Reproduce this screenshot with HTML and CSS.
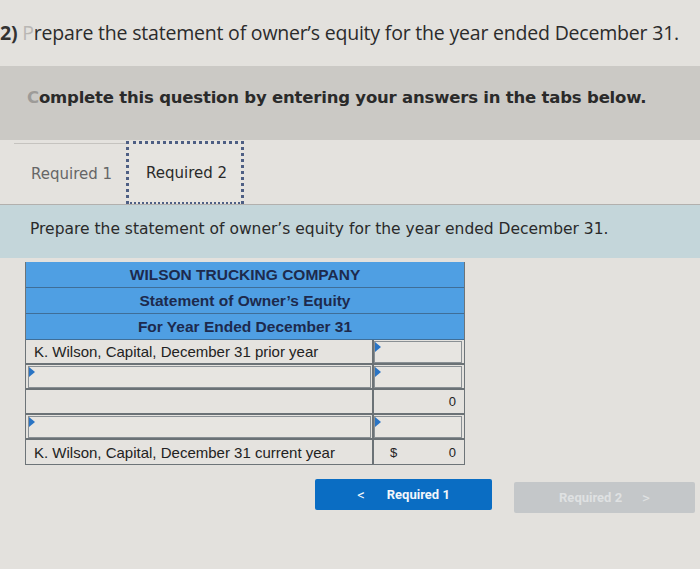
FILE: index.html
```html
<!DOCTYPE html>
<html>
<head>
<meta charset="utf-8">
<link rel="stylesheet" href="styles.css">
</head>
<body>
<h1 class="title"><span class="num">2)</span> <span class="p-faint">P</span>repare the statement of owner’s equity for the year ended December 31.</h1>

<div class="instructions"><span class="c-faint">C</span>omplete this question by entering your answers in the tabs below.</div>

<div class="tabs">
  <div class="tab">Required 1</div>
  <div class="tab tab-active">Required 2</div>
</div>

<div class="prompt">Prepare the statement of owner’s equity for the year ended December 31.</div>

<div class="sheet">
  <div class="hrow">WILSON TRUCKING COMPANY</div>
  <div class="hrow">Statement of Owner’s Equity</div>
  <div class="hrow">For Year Ended December 31</div>

  <div class="row">
    <div class="lbl">K. Wilson, Capital, December 31 prior year</div>
    <div class="val"><div class="inp"></div></div>
  </div>
  <div class="row">
    <div class="lbl"><div class="inp"></div></div>
    <div class="val"><div class="inp"></div></div>
  </div>
  <div class="row">
    <div class="lbl"></div>
    <div class="val num-right">0</div>
  </div>
  <div class="row">
    <div class="lbl"><div class="inp"></div></div>
    <div class="val"><div class="inp"></div></div>
  </div>
  <div class="row last">
    <div class="lbl">K. Wilson, Capital, December 31 current year</div>
    <div class="val total"><span class="dollar">$</span><span>0</span></div>
  </div>
</div>

<div class="nav">
  <div class="btn btn-prev"><span class="chev">&lt;</span>Required 1</div>
  <div class="btn btn-next">Required 2<span class="chev">&gt;</span></div>
</div>
</body>
</html>
```

FILE: styles.css
```css
html, body {
  margin: 0;
  padding: 0;
}
body {
  width: 700px;
  height: 569px;
  overflow: hidden;
  background: #e3e1dd;
  font-family: "Liberation Sans", Arial, sans-serif;
  color: #222;
}
.title {
  margin: 0;
  padding: 20px 0 0 0;
  height: 46px;
  box-sizing: border-box;
  font-family: "Open Sans", "Liberation Sans", sans-serif;
  font-weight: 400;
  font-size: 19.5px;
  line-height: 26px;
  color: #2b2b2b;
  white-space: nowrap;
  letter-spacing: -0.2px;
}
.title .num {
  font-weight: 700;
  color: #333;
}
.title .p-faint {
  color: #b9b7b4;
}
.instructions {
  margin-top: 20px;
  height: 74px;
  background: #cbc9c5;
  box-sizing: border-box;
  padding: 21px 0 0 27px;
  font-family: "DejaVu Sans", Verdana, sans-serif;
  font-weight: 700;
  font-size: 16.5px;
  line-height: 22px;
  color: #2a2a2a;
  letter-spacing: -0.2px;
}
.c-faint {
  color: #9d9b98;
}
.tabs {
  display: flex;
  align-items: stretch;
  height: 65px;
  box-sizing: border-box;
  padding-left: 14px;
  border-bottom: 1px solid #b2b0ad;
  background: #e4e2de;
}
.tab {
  display: flex;
  align-items: center;
  padding: 0 14px 0 17px;
  margin-top: 3px;
  border-top: 1px solid #c5c3bf;
  font-family: "DejaVu Sans", Verdana, sans-serif;
  font-size: 15px;
  color: #666;
}
.tab-active {
  color: #2a2a2a;
  border: 3px dotted #4e5f84;
  border-bottom-width: 2px;
  padding: 0 14px 0 17px;
  margin-top: 1px;
  background: #e6e4e0;
}
.prompt {
  height: 53px;
  box-sizing: border-box;
  background: #c4d6da;
  padding: 14px 0 0 30px;
  font-family: "DejaVu Sans", Verdana, sans-serif;
  font-size: 15.5px;
  line-height: 20px;
  color: #2a2a2a;
}
.sheet {
  margin: 4px 0 0 25px;
  width: 438px;
  border: 1px solid #6d7478;
  border-top: none;
}
.hrow {
  height: 25px;
  background: #4f9fe3;
  border-bottom: 1px solid #3f6e98;
  text-align: center;
  font-weight: 700;
  font-size: 15.5px;
  line-height: 26px;
  color: #1d2a4d;
}
.row {
  display: flex;
  height: 23px;
  border-bottom: 2px solid #6b7276;
  background: #e5e3df;
}
.row.last {
  border-bottom: none;
  height: 24px;
}
.lbl {
  flex: 1 1 0;
  min-width: 0;
  display: flex;
  align-items: center;
  padding: 0 8px;
  font-size: 15px;
  color: #222;
  border-right: 2px solid #6b7276;
  white-space: nowrap;
}
.lbl .inp {
  margin-left: -6px;
  margin-right: -7px;
}
.val {
  flex: 0 0 90px;
  display: flex;
  align-items: center;
  font-size: 13px;
  color: #222;
  box-sizing: border-box;
}
.inp {
  position: relative;
  flex: 1;
  align-self: stretch;
  margin: 1px 2px 0 0;
  border: 1px solid #8a9094;
  background: #e7e5e1;
}
.inp::before {
  content: "";
  position: absolute;
  left: 0;
  top: 0;
  border-top: 5px solid transparent;
  border-bottom: 5px solid transparent;
  border-left: 6px solid #2a74c4;
}
.num-right {
  justify-content: flex-end;
  padding-right: 8px;
}
.total {
  justify-content: space-between;
  padding: 0 8px 0 16px;
}
.nav {
  display: flex;
  align-items: flex-start;
  margin-top: 14px;
  padding-left: 315px;
  gap: 22px;
}
.btn {
  display: flex;
  align-items: center;
  justify-content: center;
  height: 31px;
  border-radius: 2px;
  font-family: "Roboto", "Liberation Sans", sans-serif;
  font-weight: 700;
  font-size: 13px;
}
.btn-prev {
  width: 177px;
  background: #0a6dc3;
  color: #f2f6fb;
}
.btn-prev .chev {
  margin-right: 22px;
  font-weight: 400;
  font-size: 15px;
}
.btn-next {
  width: 181px;
  margin-top: 3px;
  background: #c4c7c9;
  color: #dfe1e2;
}
.btn-next .chev {
  margin-left: 20px;
  font-weight: 400;
  font-size: 15px;
}
```
